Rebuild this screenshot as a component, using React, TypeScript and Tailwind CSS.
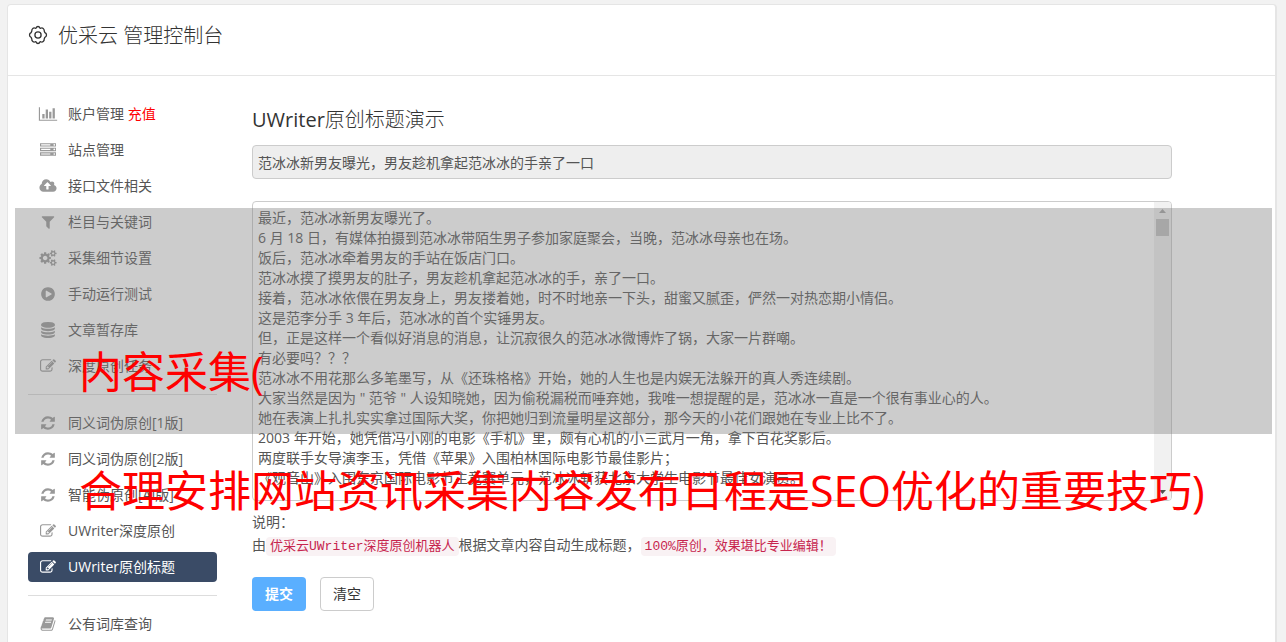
import { useState } from "react";

const icons = {
  chart: "M640 896v512h-256v-512h256zm384-512v1024h-256v-1024h256zm1024 1152v128h-2048v-1536h128v1408h1920zm-640-896v768h-256v-768h256zm384-384v1152h-256v-1152h256z",
  server: "M128 1408h1024v-128h-1024v128zm0-512h1024v-128h-1024v128zm1568 448q0-40-28-68t-68-28-68 28-28 68 28 68 68 28 68-28 28-68zm-1568-960h1024v-128h-1024v128zm1568 448q0-40-28-68t-68-28-68 28-28 68 28 68 68 28 68-28 28-68zm0-512q0-40-28-68t-68-28-68 28-28 68 28 68 68 28 68-28 28-68zm96 832v384h-1792v-384h1792zm0-512v384h-1792v-384h1792zm0-512v384h-1792v-384h1792z",
  upload: "M1280 864q0-14-9-23l-352-352q-9-9-23-9t-23 9l-351 351q-10 12-10 24 0 14 9 23t23 9h224v352q0 13 9.5 22.5t22.5 9.5h192q13 0 22.5-9.5t9.5-22.5v-352h224q13 0 22.5-9.5t9.5-22.5zm640 288q0 159-112.5 271.5t-271.5 112.5h-1088q-185 0-316.5-131.5t-131.5-316.5q0-130 70-240t188-165q-2-30-2-43 0-212 150-362t362-150q156 0 285.5 87t188.5 231q71-62 166-62 106 0 181 75t75 181q0 76-41 138 130 31 213.5 135.5t83.5 238.5z",
  filter: "M1595 295q17 41-14 70l-493 493v742q0 42-39 59-13 5-25 5-27 0-45-19l-256-256q-19-19-19-45v-486l-493-493q-31-29-14-70 17-39 59-39h1280q42 0 59 39z",
  cogs: "M896 896q0-106-75-181t-181-75-181 75-75 181 75 181 181 75 181-75 75-181zm768 512q0-52-38-90t-90-38-90 38-38 90q0 53 37.5 90.5t90.5 37.5 90.5-37.5 37.5-90.5zm0-1024q0-52-38-90t-90-38-90 38-38 90q0 53 37.5 90.5t90.5 37.5 90.5-37.5 37.5-90.5zm-384 421v185q0 10-7 19.5t-16 10.5l-155 24q-11 35-32 76 34 48 90 115 7 11 7 20 0 12-7 19-23 30-82.5 89.5t-78.5 59.5q-11 0-21-7l-115-90q-37 19-77 31-11 108-23 155-7 24-30 24h-186q-11 0-20-7.5t-10-17.5l-23-153q-34-10-75-31l-118 89q-7 7-20 7-11 0-21-8-144-133-144-160 0-9 7-19 10-14 41-53t47-61q-23-44-35-82l-152-24q-10-1-17-9.5t-7-19.5v-185q0-10 7-19.5t16-10.5l155-24q11-35 32-76-34-48-90-115-7-11-7-20 0-12 7-20 22-30 82-89t79-59q11 0 21 7l115 90q34-18 77-32 11-108 23-154 7-24 30-24h186q11 0 20 7.5t10 17.5l23 153q34 10 75 31l118-89q8-7 20-7 11 0 21 8 144 133 144 160 0 8-7 19-12 16-42 54t-45 60q23 48 34 82l152 23q10 2 17 10.5t7 19.5zm640 533v140q0 16-149 31-12 27-30 52 51 113 51 138 0 4-4 7-122 71-124 71-8 0-46-47t-52-68q-20 2-30 2t-30-2q-14 21-52 68t-46 47q-2 0-124-71-4-3-4-7 0-25 51-138-18-25-30-52-149-15-149-31v-140q0-16 149-31 13-29 30-52-51-113-51-138 0-4 4-7 4-2 35-20t59-34 30-16q8 0 46 46.5t52 67.5q20-2 30-2t30 2q51-71 92-112l6-2q4 0 124 70 4 3 4 7 0 25-51 138 17 23 30 52 149 15 149 31zm0-1024v140q0 16-149 31-12 27-30 52 51 113 51 138 0 4-4 7-122 71-124 71-8 0-46-47t-52-68q-20 2-30 2t-30-2q-14 21-52 68t-46 47q-2 0-124-71-4-3-4-7 0-25 51-138-18-25-30-52-149-15-149-31v-140q0-16 149-31 13-29 30-52-51-113-51-138 0-4 4-7 4-2 35-20t59-34 30-16q8 0 46 46.5t52 67.5q20-2 30-2t30 2q51-71 92-112l6-2q4 0 124 70 4 3 4 7 0 25-51 138 17 23 30 52 149 15 149 31z",
  play: "M896 128q209 0 385.5 103t279.5 279.5 103 385.5-103 385.5-279.5 279.5-385.5 103-385.5-103-279.5-279.5-103-385.5 103-385.5 279.5-279.5 385.5-103zm384 823q32-18 32-55t-32-55l-544-320q-31-19-64-1-32 19-32 56v640q0 37 32 56 16 8 32 8 17 0 32-9z",
  database: "M896 768q237 0 443-43t325-127v170q0 69-103 128t-280 93.5-385 34.5-385-34.5-280-93.5-103-128v-170q119 84 325 127t443 43zm0 768q237 0 443-43t325-127v170q0 69-103 128t-280 93.5-385 34.5-385-34.5-280-93.5-103-128v-170q119 84 325 127t443 43zm0-384q237 0 443-43t325-127v170q0 69-103 128t-280 93.5-385 34.5-385-34.5-280-93.5-103-128v-170q119 84 325 127t443 43zm0-1152q208 0 385 34.5t280 93.5 103 128v128q0 69-103 128t-280 93.5-385 34.5-385-34.5-280-93.5-103-128v-128q0-69 103-128t280-93.5 385-34.5z",
  edit: "M888 1184l116-116-152-152-116 116v56h96v96h56zm440-720q-16-16-33 1l-350 350q-17 17-1 33t33-1l350-350q17-17 1-33zm80 594v190q0 119-84.5 203.5t-203.5 84.5h-832q-119 0-203.5-84.5t-84.5-203.5v-832q0-119 84.5-203.5t203.5-84.5h832q63 0 117 25 15 7 18 23 3 17-9 29l-49 49q-14 14-32 8-23-6-45-6h-832q-66 0-113 47t-47 113v832q0 66 47 113t113 47h832q66 0 113-47t47-113v-126q0-13 9-22l64-64q15-15 35-7t20 29zm-96-738l288 288-672 672h-288v-288zm444 132l-92 92-288-288 92-92q28-28 68-28t68 28l152 152q28 28 28 68t-28 68z",
  refresh: "M1639 1056q0 5-1 7-64 268-268 434.5t-478 166.5q-146 0-282.5-55t-243.5-157l-129 129q-19 19-45 19t-45-19-19-45v-448q0-26 19-45t45-19h448q26 0 45 19t19 45-19 45l-137 137q71 66 161 102t187 36q134 0 250-65t186-179q11-17 53-117 8-23 30-23h192q13 0 22.5 9.5t9.5 22.5zm25-800v448q0 26-19 45t-45 19h-448q-26 0-45-19t-19-45 19-45l138-138q-148-137-349-137-134 0-250 65t-186 179q-11 17-53 117-8 23-30 23h-199q-13 0-22.5-9.5t-9.5-22.5v-7q65-268 270-434.5t480-166.5q146 0 284 55.5t245 156.5l130-129q19-19 45-19t45 19 19 45z",
  book: "M1703 478q40 57 18 129l-275 906q-19 64-76.5 107.5t-122.5 43.5h-923q-77 0-148.5-53.5t-99.5-131.5q-24-67-2-127 0-4 3-27t4-37q1-8-3-21.5t-3-19.5q2-11 8-21t16.5-23.5 16.5-23.5q23-38 45-91.5t30-91.5q3-10 .5-30t-.5-28q3-11 17-28t17-23q21-36 42-92t25-90q1-9-2.5-32t.5-28q4-13 22-30.5t22-22.5q19-26 42.5-84.5t27.5-96.5q1-8-3-25.5t-2-26.5q2-8 9-18t18-23 17-21q8-12 16.5-30.5t15-35 16-36 19.5-32 26.5-23.5 36-11.5 47.5 5.5l-1 3q38-9 51-9h761q74 0 114 56t18 130l-274 906q-36 119-71.5 153.5t-128.5 34.5h-869q-27 0-38 15-11 16-1 43 24 70 144 70h923q29 0 56-15.5t35-41.5l300-987q7-22 5-57 38 15 59 43zm-1064 2q-4 13 2 22.5t20 9.5h608q13 0 25.5-9.5t16.5-22.5l21-64q4-13-2-22.5t-20-9.5h-608q-13 0-25.5 9.5t-16.5 22.5zm-83 256q-4 13 2 22.5t20 9.5h608q13 0 25.5-9.5t16.5-22.5l21-64q4-13-2-22.5t-20-9.5h-608q-13 0-25.5 9.5t-16.5 22.5z",
};

type IconName = keyof typeof icons;

type MenuItem = {
  icon: IconName;
  label: string;
  extra?: string;
  active?: boolean;
};

const menuGroups: MenuItem[][] = [
  [
    { icon: "chart", label: "账户管理", extra: "充值" },
    { icon: "server", label: "站点管理" },
    { icon: "upload", label: "接口文件相关" },
    { icon: "filter", label: "栏目与关键词" },
    { icon: "cogs", label: "采集细节设置" },
    { icon: "play", label: "手动运行测试" },
    { icon: "database", label: "文章暂存库" },
    { icon: "edit", label: "深度原创任务" },
  ],
  [
    { icon: "refresh", label: "同义词伪原创[1版]" },
    { icon: "refresh", label: "同义词伪原创[2版]" },
    { icon: "refresh", label: "智能伪原创[AI版]" },
    { icon: "edit", label: "UWriter深度原创" },
    { icon: "edit", label: "UWriter原创标题", active: true },
  ],
  [{ icon: "book", label: "公有词库查询" }],
];

const article = `最近，范冰冰新男友曝光了。
6 月 18 日，有媒体拍摄到范冰冰带陌生男子参加家庭聚会，当晚，范冰冰母亲也在场。
饭后，范冰冰牵着男友的手站在饭店门口。
范冰冰摸了摸男友的肚子，男友趁机拿起范冰冰的手，亲了一口。
接着，范冰冰依偎在男友身上，男友搂着她，时不时地亲一下头，甜蜜又腻歪，俨然一对热恋期小情侣。
这是范李分手 3 年后，范冰冰的首个实锤男友。
但，正是这样一个看似好消息的消息，让沉寂很久的范冰冰微博炸了锅，大家一片群嘲。
有必要吗？？？
范冰冰不用花那么多笔墨写，从《还珠格格》开始，她的人生也是内娱无法躲开的真人秀连续剧。
大家当然是因为 " 范爷 " 人设知晓她，因为偷税漏税而唾弃她，我唯一想提醒的是，范冰冰一直是一个很有事业心的人。
她在表演上扎扎实实拿过国际大奖，你把她归到流量明星这部分，那今天的小花们跟她在专业上比不了。
2003 年开始，她凭借冯小刚的电影《手机》里，颇有心机的小三武月一角，拿下百花奖影后。
两度联手女导演李玉，凭借《苹果》入围柏林国际电影节最佳影片；
《观音山》入围东京国际电影节主竞赛单元，范冰冰斩获北京大学生电影节最佳女演员。`;

const Icon = ({ name }: { name: IconName }) => (
  <svg
    viewBox={name === "chart" ? "0 0 2048 1792" : name === "upload" || name === "cogs" ? "0 0 1920 1792" : "0 0 1792 1792"}
    className="h-4 w-5 shrink-0"
    fill="currentColor"
    aria-hidden="true"
  >
    <path d={icons[name]} />
  </svg>
);

const GearIcon = () => (
  <svg viewBox="0 0 20 20" className="mb-[2px] h-5 w-5" fill="none" stroke="currentColor" strokeWidth="1.3" strokeLinejoin="round" aria-hidden="true">
    <path d="M8.3 2.8Q8.500 1.500 10 1.500T11.700 2.800L12.700 3.300Q14 2.500 15.200 3.500T16.200 6L16.900 7.700Q18.500 8.300 18.500 10T16.900 12.300L16.200 14Q16.400 15.500 15.200 16.500T12.700 16.700L11.700 17.200Q11.500 18.500 10 18.500T8.300 17.200L7.300 16.700Q6 17.500 4.800 16.500T3.800 14L3.100 12.300Q1.500 11.700 1.500 10T3.100 7.700L3.800 6Q3.600 4.500 4.800 3.500T7.300 3.300Z" />
    <circle cx="10" cy="10" r="3.1" />
  </svg>
);

const App: React.FC = () => {
  const [title, setTitle] = useState("范冰冰新男友曝光，男友趁机拿起范冰冰的手亲了一口");
  const [content, setContent] = useState(article);

  const handleSubmit = (e: React.FormEvent<HTMLFormElement>) => {
    e.preventDefault();
  };

  const handleClear = () => {
    setTitle("");
    setContent("");
  };

  return (
    <div className="relative h-screen overflow-hidden bg-[#f2f2f2] pt-1 pr-[9px] pl-[7px] font-['Open_Sans','Noto_Sans_CJK_SC',sans-serif] text-sm text-[#555]">
      <div className="min-h-screen rounded-t border border-r-2 border-[#e5e5e5] bg-white">
        <header className="flex h-[71px] items-center gap-[10px] border-b border-[#e5e5e5] px-5 pb-2 text-[#333]">
          <GearIcon />
          <h1 className="text-xl font-light">优采云 管理控制台</h1>
        </header>

        <div className="flex gap-[35px] pt-[23px] pr-[103px] pl-5">
          <nav className="w-[189px] shrink-0">
            {menuGroups.map((group, i) => (
              <ul key={i} className={i > 0 ? "mt-[13px] flex flex-col gap-[6px] border-t border-[#ddd] pt-[13px]" : "flex flex-col gap-[6px]"}>
                {group.map((item) => (
                  <li key={item.label}>
                    <a
                      href="#"
                      className={
                        item.active
                          ? "flex h-[30px] items-center gap-[10px] rounded bg-[#3a4b66] px-[10px] text-white"
                          : "flex h-[30px] items-center gap-[10px] rounded px-[10px]"
                      }
                    >
                      <span className={item.active ? "text-white" : "text-[#999]"}>
                        <Icon name={item.icon} />
                      </span>
                      <span>
                        {item.label}
                        {item.extra && <span className="text-[red]"> {item.extra}</span>}
                      </span>
                    </a>
                  </li>
                ))}
              </ul>
            ))}
          </nav>

          <form className="min-w-0 flex-1" onSubmit={handleSubmit}>
            <h2 className="mt-[6px] mb-[10px] text-xl leading-[30px] text-[#333]">
              UWriter<span className="font-light">原创标题演示</span>
            </h2>
            <input
              type="text"
              aria-label="标题"
              readOnly
              value={title}
              className="block h-[34px] w-full rounded border border-[#ccc] bg-[#eee] px-[5px] outline-none"
            />
            <div className="mt-[22px] flex h-[300px] overflow-hidden rounded border border-[#ccc] bg-white">
              <textarea
                aria-label="文章内容"
                value={content}
                onChange={(e) => setContent(e.target.value)}
                className="h-full min-w-0 flex-1 resize-none overflow-y-scroll px-[5px] py-[6px] leading-5 outline-none [scrollbar-width:none]"
              />
              <div className="flex w-[17px] shrink-0 flex-col items-center bg-[#f1f1f1]" aria-hidden="true">
                <svg viewBox="0 0 17 17" className="h-[17px] w-[17px]">
                  <path d="M5 11h7L8.500 7z" fill="#a3a3a3" />
                </svg>
                <div className="h-[17px] w-[13px] bg-[#c1c1c1]" />
                <svg viewBox="0 0 17 17" className="mt-auto h-[17px] w-[17px]">
                  <path d="M5 7h7L8.500 11z" fill="#505050" />
                </svg>
              </div>
            </div>
            <p className="mt-[9px] leading-[23px]">
              说明：
              <br />
              由
              <code className="rounded bg-[#f9f2f4] px-1 py-[2px] font-['Liberation_Mono','Noto_Sans_CJK_SC',monospace] text-[13px] text-[#c7254e]">优采云UWriter深度原创机器人</code>
              根据文章内容自动生成标题，
              <code className="rounded bg-[#f9f2f4] px-1 py-[2px] font-['Liberation_Mono','Noto_Sans_CJK_SC',monospace] text-[13px] text-[#c7254e]">100%原创，效果堪比专业编辑！</code>
            </p>
            <div className="mt-[19px] flex gap-[14px]">
              <button type="submit" className="h-[34px] w-[54px] rounded bg-[#5aafff] font-bold text-white">
                提交
              </button>
              <button type="button" onClick={handleClear} className="h-[34px] w-[54px] rounded border border-[#ccc] bg-white text-[#333]">
                清空
              </button>
            </div>
          </form>
        </div>
      </div>

      {/* caption over the page */}
      <div className="pointer-events-none absolute top-[208px] right-[14px] left-[15px] h-[226px] bg-[#808080]/40 pt-[104px] pl-16 text-[43px] leading-[119px] whitespace-nowrap text-[red]">
        <p>内容采集(</p>
        <p>合理安排网站资讯采集内容发布日程是SEO优化的重要技巧)</p>
      </div>
    </div>
  );
};

export default App;
